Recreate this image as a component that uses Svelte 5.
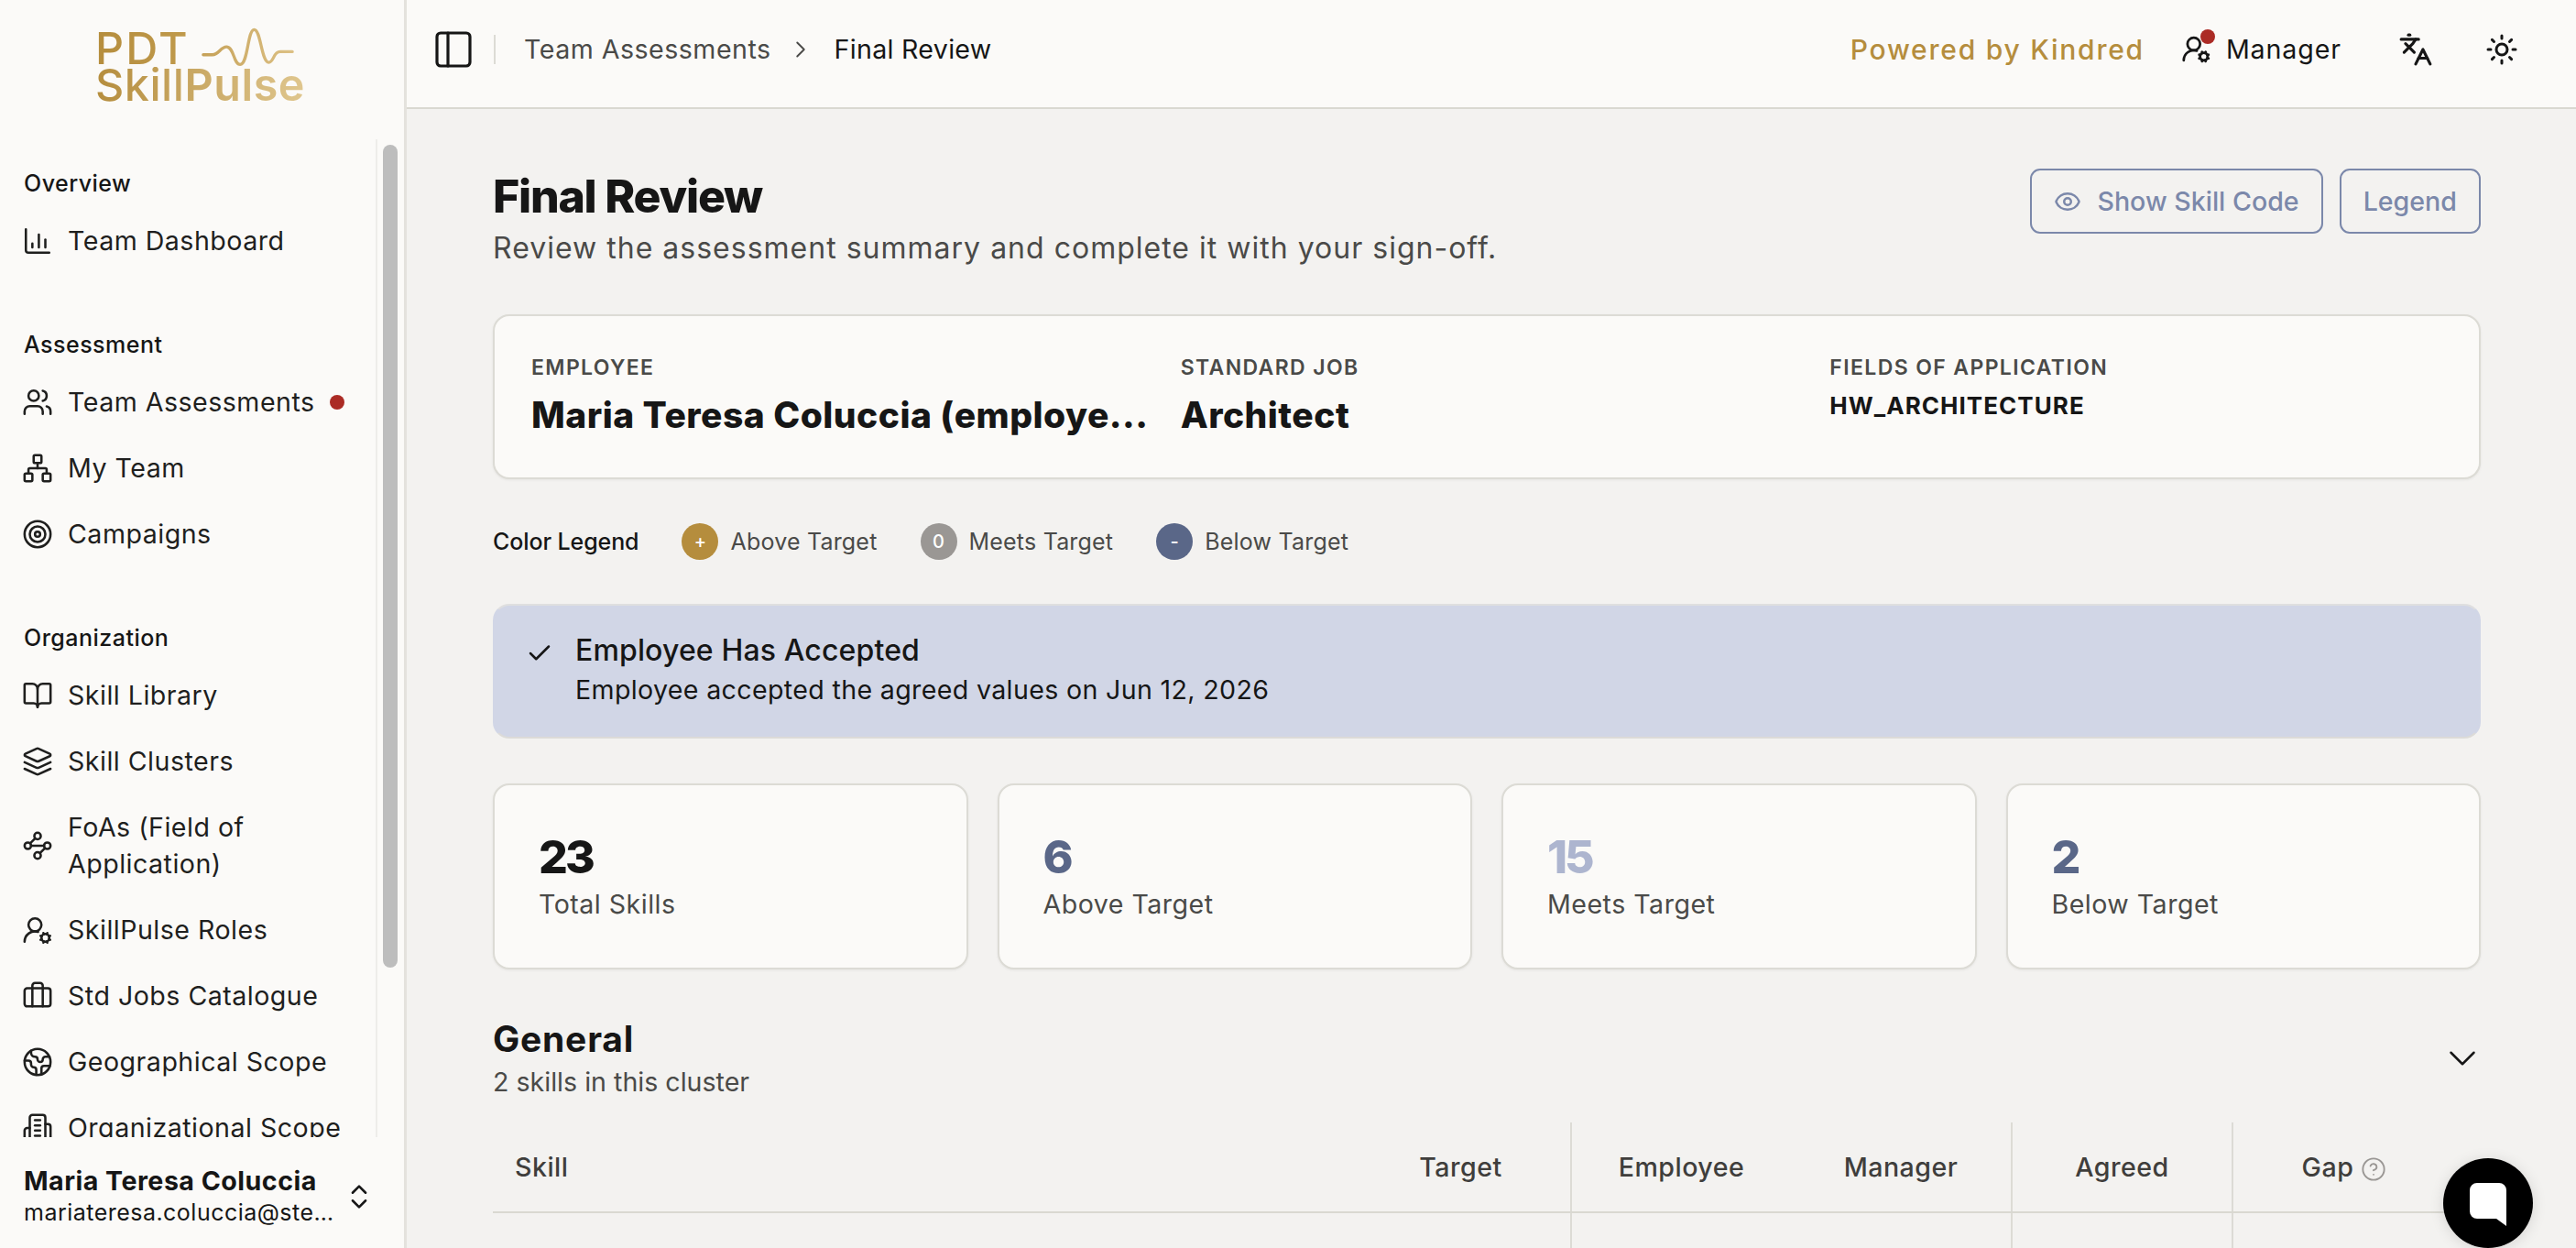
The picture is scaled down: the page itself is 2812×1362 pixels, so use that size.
<script>
  const ic = {
    chart: '<path d="M3 3v16a2 2 0 0 0 2 2h16"/><path d="M18 17v-6"/><path d="M13 17V7"/><path d="M8 17v-3"/>',
    users: '<path d="M16 21v-2a4 4 0 0 0-4-4H6a4 4 0 0 0-4 4v2"/><circle cx="9" cy="7" r="4"/><path d="M22 21v-2a4 4 0 0 0-3-3.87"/><path d="M16 3.13a4 4 0 0 1 0 7.75"/>',
    network: '<rect x="16" y="16" width="6" height="6" rx="1"/><rect x="2" y="16" width="6" height="6" rx="1"/><rect x="9" y="2" width="6" height="6" rx="1"/><path d="M5 16v-3a1 1 0 0 1 1-1h12a1 1 0 0 1 1 1v3"/><path d="M12 12V8"/>',
    target: '<circle cx="12" cy="12" r="10"/><circle cx="12" cy="12" r="6"/><circle cx="12" cy="12" r="2"/>',
    book: '<path d="M12 7v14"/><path d="M3 18a1 1 0 0 1-1-1V4a1 1 0 0 1 1-1h5a4 4 0 0 1 4 4 4 4 0 0 1 4-4h5a1 1 0 0 1 1 1v13a1 1 0 0 1-1 1h-6a3 3 0 0 0-3 3 3 3 0 0 0-3-3z"/>',
    layers: '<path d="m12.83 2.18a2 2 0 0 0-1.66 0L2.6 6.08a1 1 0 0 0 0 1.83l8.58 3.91a2 2 0 0 0 1.66 0l8.58-3.9a1 1 0 0 0 0-1.83Z"/><path d="m22 17.65-9.17 4.16a2 2 0 0 1-1.66 0L2 17.65"/><path d="m22 12.65-9.17 4.16a2 2 0 0 1-1.66 0L2 12.65"/>',
    waypoints: '<circle cx="12" cy="4.5" r="2.5"/><path d="m10.2 6.3-3.9 3.9"/><circle cx="4.5" cy="12" r="2.5"/><path d="M7 12h10"/><circle cx="19.5" cy="12" r="2.5"/><path d="m13.8 17.7 3.9-3.9"/><circle cx="12" cy="19.5" r="2.5"/>',
    usercog: '<path d="M2 21a8 8 0 0 1 10.434-7.62"/><circle cx="10" cy="8" r="5"/><circle cx="18" cy="18" r="3"/><path d="m19.5 14.3-.4.9"/><path d="m16.9 20.8-.4.9"/><path d="m21.7 19.5-.9-.4"/><path d="m15.2 16.9-.9-.4"/><path d="m21.7 16.5-.9.4"/><path d="m15.2 19.1-.9.4"/><path d="m19.5 21.7-.4-.9"/><path d="m16.9 15.2-.4-.9"/>',
    briefcase: '<path d="M16 20V4a2 2 0 0 0-2-2h-4a2 2 0 0 0-2 2v16"/><rect x="2" y="6" width="20" height="14" rx="2"/>',
    earth: '<path d="M21.54 15H17a2 2 0 0 0-2 2v4.54"/><path d="M7 3.34V5a3 3 0 0 0 3 3a2 2 0 0 1 2 2c0 1.1.9 2 2 2a2 2 0 0 0 2-2c0-1.1.9-2 2-2h3.17"/><path d="M11 21.95V18a2 2 0 0 0-2-2a2 2 0 0 1-2-2v-1a2 2 0 0 0-2-2H2.05"/><circle cx="12" cy="12" r="10"/>',
    building: '<path d="M6 22V4a2 2 0 0 1 2-2h8a2 2 0 0 1 2 2v18Z"/><path d="M6 12H4a2 2 0 0 0-2 2v6a2 2 0 0 0 2 2h2"/><path d="M18 9h2a2 2 0 0 1 2 2v9a2 2 0 0 1-2 2h-2"/><path d="M10 6h4"/><path d="M10 10h4"/><path d="M10 14h4"/><path d="M10 18h4"/>',
    updown: '<path d="m7 15 5 5 5-5"/><path d="m7 9 5-5 5 5"/>',
    right: '<path d="m9 18 6-6-6-6"/>',
    down: '<path d="m6 9 6 6 6-6"/>',
    languages: '<path d="m5 8 6 6"/><path d="m4 14 6-6 2-3"/><path d="M2 5h12"/><path d="M7 2h1"/><path d="m22 22-5-10-5 10"/><path d="M14 18h6"/>',
    sun: '<circle cx="12" cy="12" r="4"/><path d="M12 2v2"/><path d="M12 20v2"/><path d="m4.93 4.93 1.41 1.41"/><path d="m17.66 17.66 1.41 1.41"/><path d="M2 12h2"/><path d="M20 12h2"/><path d="m6.34 17.66-1.41 1.41"/><path d="m19.07 4.93-1.41 1.41"/>',
    eye: '<path d="M2.062 12.348a1 1 0 0 1 0-.696 10.75 10.75 0 0 1 19.876 0 1 1 0 0 1 0 .696 10.75 10.75 0 0 1-19.876 0"/><circle cx="12" cy="12" r="3"/>',
    check: '<path d="M20 6 9 17l-5-5"/>',
    help: '<circle cx="12" cy="12" r="10"/><path d="M9.09 9a3 3 0 0 1 5.83 1c0 2-3 3-3 3"/><path d="M12 17h.01"/>'
  };

  const nav = [
    { title: 'Overview', items: [{ label: 'Team Dashboard', icon: 'chart' }] },
    { title: 'Assessment', items: [
      { label: 'Team Assessments', icon: 'users', dot: true },
      { label: 'My Team', icon: 'network' },
      { label: 'Campaigns', icon: 'target' }
    ] },
    { title: 'Organization', items: [
      { label: 'Skill Library', icon: 'book' },
      { label: 'Skill Clusters', icon: 'layers' },
      { label: 'FoAs (Field of Application)', icon: 'waypoints' },
      { label: 'SkillPulse Roles', icon: 'usercog' },
      { label: 'Std Jobs Catalogue', icon: 'briefcase' },
      { label: 'Geographical Scope', icon: 'earth' },
      { label: 'Organizational Scope', icon: 'building' }
    ] }
  ];

  const legend = [
    { sign: '+', label: 'Above Target', color: '#b58d3d' },
    { sign: '0', label: 'Meets Target', color: '#9a9794' },
    { sign: '-', label: 'Below Target', color: '#5a6788' }
  ];

  const stats = [
    { value: 23, label: 'Total Skills', color: '#161616' },
    { value: 6, label: 'Above Target', color: '#5a6788' },
    { value: 15, label: 'Meets Target', color: '#adb5cf' },
    { value: 2, label: 'Below Target', color: '#5a6788' }
  ];
</script>

{#snippet icon(name, size = 30, width = 2)}
  <svg class="icon" viewBox="0 0 24 24" width={size} height={size} stroke-width={width}>{@html ic[name]}</svg>
{/snippet}

<div class="app">
  <aside class="sidebar">
    <div class="logo">
      <div class="logo-top">
        <span class="logo-pdt">PDT</span>
        <svg class="pulse" viewBox="460 30 310 130" width="103" height="43">
          <defs>
            <linearGradient id="pulseGrad" x1="0" x2="1" y1="0" y2="0">
              <stop offset="0" stop-color="#c6a259" />
              <stop offset="1" stop-color="#dcc084" />
            </linearGradient>
          </defs>
          <path d="M468 123h30c22 0 28-28 48-26 24 3 22 58 44 58 26 0 24-115 46-115 22 0 24 108 48 108 18 0 14-35 38-35h40" fill="none" stroke="url(#pulseGrad)" stroke-width="10" stroke-linecap="round" stroke-linejoin="round" />
        </svg>
      </div>
      <div class="logo-name">Skill<b>Pulse</b></div>
    </div>

    <div class="nav-wrap">
      <nav class="nav">
        {#each nav as section}
          <section class="nav-section">
            <div class="nav-title">{section.title}</div>
            {#each section.items as item}
              <div class="nav-item">
                {@render icon(item.icon, 34, 1.8)}
                <span class="nav-label">{item.label}</span>
                {#if item.dot}<span class="nav-dot"></span>{/if}
              </div>
            {/each}
          </section>
        {/each}
      </nav>
      <div class="scrollbar"></div>
    </div>

    <div class="user">
      <div class="user-text">
        <div class="user-name">Maria Teresa Coluccia</div>
        <div class="user-mail">mariateresa.coluccia@stellantis.com</div>
      </div>
      {@render icon('updown', 34, 1.8)}
    </div>
  </aside>

  <div class="main">
    <header class="topbar">
      <button class="toggle" aria-label="Toggle sidebar">
        <svg class="icon" viewBox="2 2 20 20" width="40" height="40" stroke-width="1.6">
          <rect x="3" y="3" width="18" height="18" rx="2" /><path d="M9 3v18" />
        </svg>
      </button>
      <span class="divider"></span>
      <span class="crumb">Team Assessments</span>
      <span class="crumb-sep">{@render icon('right', 30, 1.5)}</span>
      <span class="crumb current">Final Review</span>
      <span class="spacer"></span>
      <span class="powered">Powered by Kindred</span>
      <span class="role">
        <span class="role-icon">{@render icon('usercog', 33, 2)}<i></i></span>
        Manager
      </span>
      <span class="top-icon lang">{@render icon('languages', 38, 2)}</span>
      <span class="top-icon sun">{@render icon('sun', 36, 2)}</span>
    </header>

    <main class="page">
      <div class="page-head">
        <div>
          <h1>Final Review</h1>
          <p>Review the assessment summary and complete it with your sign-off.</p>
        </div>
        <div class="actions">
          <button class="outline">{@render icon('eye', 30, 2)} Show Skill Code</button>
          <button class="outline">Legend</button>
        </div>
      </div>

      <div class="info card">
        <div>
          <div class="info-label">EMPLOYEE</div>
          <div class="info-value">Maria Teresa Coluccia (employe...</div>
        </div>
        <div>
          <div class="info-label">STANDARD JOB</div>
          <div class="info-value">Architect</div>
        </div>
        <div>
          <div class="info-label">FIELDS OF APPLICATION</div>
          <div class="info-small">HW_ARCHITECTURE</div>
        </div>
      </div>

      <div class="legend">
        <span class="legend-title">Color Legend</span>
        {#each legend as l}
          <span class="legend-item">
            <span class="legend-dot" style="background: {l.color}">{l.sign}</span>
            {l.label}
          </span>
        {/each}
      </div>

      <div class="alert">
        {@render icon('check', 30, 2)}
        <div>
          <div class="alert-title">Employee Has Accepted</div>
          <div class="alert-text">Employee accepted the agreed values on Jun 12, 2026</div>
        </div>
      </div>

      <div class="stats">
        {#each stats as s}
          <div class="stat card">
            <div class="stat-value" style="color: {s.color}">{s.value}</div>
            <div class="stat-label">{s.label}</div>
          </div>
        {/each}
      </div>

      <div class="cluster">
        <div>
          <h2>General</h2>
          <div class="cluster-sub">2 skills in this cluster</div>
        </div>
        {@render icon('down', 50, 1.2)}
      </div>

      <table>
        <colgroup>
          <col style="width: 937px" /><col style="width: 240px" /><col style="width: 240px" />
          <col style="width: 241px" /><col style="width: 241px" /><col style="width: 271px" />
        </colgroup>
        <thead>
          <tr>
            <th class="left">Skill</th>
            <th>Target</th>
            <th class="line">Employee</th>
            <th>Manager</th>
            <th class="line">Agreed</th>
            <th class="line gap">Gap {@render icon('help', 28, 1.6)}</th>
          </tr>
        </thead>
        <tbody>
          <tr>
            <td></td><td></td><td class="line"></td><td></td><td class="line"></td><td class="line"></td>
          </tr>
        </tbody>
      </table>
    </main>
  </div>

  <button class="chat" aria-label="Chat">
    <svg viewBox="0 0 40 47" width="40" height="47">
      <path d="M8 0h24a8 8 0 0 1 8 8v39l-11-8H8a8 8 0 0 1-8-8V8a8 8 0 0 1 8-8z" fill="#fff" />
    </svg>
  </button>
</div>

<style>
  :global(body) {
    margin: 0;
    background: #f3f2f0;
  }

  .app {
    display: flex;
    height: 100vh;
    overflow: hidden;
    position: relative;
    font-family: Inter, "Liberation Sans", sans-serif;
    color: #161616;
    letter-spacing: 0.48px;
  }

  .icon {
    fill: none;
    stroke: currentColor;
    stroke-linecap: round;
    stroke-linejoin: round;
    flex: none;
  }

  button {
    font: inherit;
    letter-spacing: inherit;
    background: none;
    border: 0;
    padding: 0;
    color: inherit;
  }

  /* sidebar */
  .sidebar {
    width: 441px;
    flex: none;
    display: flex;
    flex-direction: column;
    background: #fbfaf8;
    border-right: 3px solid #e4e2dd;
  }

  .logo {
    height: 152px;
    flex: none;
    padding: 33px 0 0 104px;
    box-sizing: border-box;
  }

  .logo-top {
    display: flex;
    align-items: center;
    height: 40px;
    gap: 12px;
  }

  .logo-pdt,
  .logo-name {
    font-size: 48.5px;
    line-height: 40px;
    font-weight: 500;
    background: linear-gradient(90deg, #b58d3d, #e0c78f);
    background-clip: text;
    -webkit-background-clip: text;
    color: transparent;
  }

  .logo-pdt {
    font-weight: 550;
    letter-spacing: 2.2px;
    background: linear-gradient(90deg, #b58d3d, #c09a4c);
    background-clip: text;
    -webkit-background-clip: text;
  }

  .logo-name {
    width: 232px;
  }

  .logo-name b {
    font-weight: 600;
  }

  .pulse {
    margin-top: -6px;
  }

  .nav-wrap {
    flex: 1;
    min-height: 0;
    position: relative;
    overflow: hidden;
  }

  .nav {
    width: 412px;
    height: 100%;
    box-sizing: border-box;
    padding: 21px 0 0 26px;
    border-right: 2px solid #eeedea;
    overflow: hidden;
  }

  .nav-section {
    margin-bottom: 50px;
  }

  .nav-title {
    font-size: 25px;
    font-weight: 500;
    line-height: 54px;
  }

  .nav-item {
    display: flex;
    align-items: center;
    gap: 16px;
    margin-left: -2px;
    padding: 16px 0;
    font-size: 28.6px;
    line-height: 40px;
    color: #1f1f1e;
  }

  .nav-label {
    max-width: 310px;
  }

  .nav-dot {
    width: 16px;
    height: 16px;
    border-radius: 50%;
    background: #ab2b25;
  }

  .scrollbar {
    position: absolute;
    left: 418px;
    top: 6px;
    width: 16px;
    height: 898px;
    border-radius: 8px;
    background: #bdbdbd;
  }

  .user {
    height: 121px;
    flex: none;
    box-sizing: border-box;
    padding: 29px 32px 0 26px;
    display: flex;
    align-items: flex-start;
    justify-content: space-between;
  }

  .user-text {
    width: 340px;
  }

  .user-name {
    font-size: 28.6px;
    font-weight: 700;
    line-height: 38px;
    white-space: nowrap;
  }

  .user-mail {
    font-size: 25px;
    line-height: 30px;
    white-space: nowrap;
    overflow: hidden;
    text-overflow: ellipsis;
  }

  .user .icon {
    margin-top: 19px;
  }

  /* top bar */
  .main {
    flex: 1;
    min-width: 0;
    display: flex;
    flex-direction: column;
  }

  .topbar {
    height: 119px;
    flex: none;
    box-sizing: border-box;
    display: flex;
    align-items: center;
    padding: 0 63px 10px 31px;
    background: #fbfaf8;
    border-bottom: 2px solid #d9d8d1;
    font-size: 28.6px;
  }

  .toggle {
    display: flex;
  }

  .divider {
    width: 2px;
    height: 32px;
    background: #dcdbd5;
    margin: 0 31px 0 24px;
  }

  .crumb {
    color: #4a4a48;
  }

  .crumb.current {
    color: #161616;
    letter-spacing: 0.3px;
  }

  .crumb-sep {
    display: flex;
    margin: 0 22px 0 17px;
    color: #4a4a48;
  }

  .spacer {
    flex: 1;
  }

  .powered {
    color: #b58d3d;
    font-weight: 500;
    font-size: 30px;
    letter-spacing: 1.76px;
  }

  .role {
    display: flex;
    align-items: center;
    gap: 16px;
    margin-left: 40px;
    letter-spacing: 0.9px;
  }

  .role-icon {
    display: flex;
    position: relative;
  }

  .role-icon i {
    position: absolute;
    right: -4px;
    top: -5px;
    width: 16px;
    height: 16px;
    border-radius: 50%;
    background: #ab2b25;
  }

  .top-icon {
    display: flex;
  }

  .lang {
    margin-left: 62px;
  }

  .sun {
    margin-left: 57px;
  }

  /* page */
  .page {
    flex: 1;
    min-height: 0;
    overflow: hidden;
    padding: 65px 104px 0 94px;
  }

  .page-head {
    display: flex;
    justify-content: space-between;
    align-items: flex-start;
    margin-bottom: 50px;
  }

  h1 {
    margin: 0;
    font-size: 50px;
    line-height: 60px;
    font-weight: 800;
    letter-spacing: -1.25px;
  }

  .page-head p {
    margin: 5px 0 0;
    font-size: 32px;
    line-height: 44px;
    color: #4a4a48;
    letter-spacing: 1.01px;
  }

  .actions {
    display: flex;
    gap: 18px;
  }

  .outline {
    height: 71px;
    box-sizing: border-box;
    display: flex;
    align-items: center;
    gap: 17px;
    padding: 0 24px;
    border: 2px solid #7b88aa;
    border-radius: 11px;
    color: #7b88aa;
    font-size: 28.6px;
    font-weight: 500;
    letter-spacing: 0;
  }

  .card {
    box-sizing: border-box;
    background: #fbfaf8;
    border: 2px solid #dcdbd5;
    border-radius: 18px;
    box-shadow: 0 1px 3px rgba(0, 0, 0, 0.06);
  }

  .info {
    height: 180px;
    padding: 36px 32px 0 40px;
    display: grid;
    grid-template-columns: repeat(3, 1fr);
    gap: 32px;
  }

  .info > div {
    min-width: 0;
  }

  .info-label {
    font-size: 23px;
    line-height: 40px;
    font-weight: 600;
    letter-spacing: 1.38px;
    color: #4a4a48;
  }

  .info-value {
    margin-top: 7px;
    font-size: 39px;
    line-height: 50px;
    font-weight: 800;
    letter-spacing: 0.47px;
    white-space: nowrap;
  }

  .info-small {
    font-size: 26px;
    line-height: 30px;
    font-weight: 700;
    letter-spacing: 1.04px;
    margin-top: 7px;
  }

  .legend {
    display: flex;
    align-items: center;
    height: 40px;
    margin-top: 48px;
    font-size: 25px;
    letter-spacing: 0.2px;
  }

  .legend-title {
    font-weight: 500;
    letter-spacing: -0.1px;
    margin-right: 47px;
  }

  .legend-item {
    display: flex;
    align-items: center;
    gap: 13px;
    color: #4a4a48;
    margin-right: 47px;
  }

  .legend-dot {
    width: 40px;
    height: 40px;
    border-radius: 50%;
    display: flex;
    align-items: center;
    justify-content: center;
    color: #fff;
    font-size: 20px;
    font-weight: 500;
  }

  .alert {
    height: 147px;
    box-sizing: border-box;
    margin-top: 48px;
    padding: 27px 0 0 34px;
    display: flex;
    gap: 24px;
    background: #d1d6e6;
    border-radius: 18px;
    border: 2px solid #d9d8d6;
    border-color: #dfdfdf #d1d6e6 #dcdbd8;
  }

  .alert > .icon {
    margin-top: 10px;
  }

  .alert-title {
    font-size: 32px;
    line-height: 44px;
    font-weight: 500;
    letter-spacing: 0.14px;
  }

  .alert-text {
    font-size: 28.6px;
    line-height: 42px;
    letter-spacing: 0.34px;
  }

  .stats {
    display: grid;
    grid-template-columns: repeat(4, 1fr);
    gap: 32px;
    margin-top: 49px;
  }

  .stat {
    height: 203px;
    padding: 48px 48px 0;
  }

  .stat-value {
    font-size: 50px;
    line-height: 60px;
    font-weight: 800;
    letter-spacing: -3px;
  }

  .stat-label {
    font-size: 28.6px;
    line-height: 44px;
    color: #4a4a48;
  }

  .cluster {
    margin-top: 51px;
    display: flex;
    justify-content: space-between;
    align-items: center;
    margin-right: -5px;
  }

  h2 {
    margin: 0;
    font-size: 39px;
    line-height: 50px;
    font-weight: 700;
    letter-spacing: 0.78px;
  }

  .cluster-sub {
    margin-top: 2px;
    font-size: 28.6px;
    line-height: 40px;
    color: #4a4a48;
    letter-spacing: 0;
  }

  table {
    width: 2170px;
    table-layout: fixed;
    border-collapse: collapse;
    margin-top: 24px;
  }

  th {
    height: 97px;
    padding: 0;
    font-size: 28.6px;
    font-weight: 500;
    color: #3f3e3c;
    border-bottom: 2px solid #d9d8d1;
  }

  th.left {
    text-align: left;
    padding-left: 24px;
  }

  th.gap {
    padding-right: 28px;
  }

  th.gap .icon {
    vertical-align: -6px;
    color: #9a9794;
  }

  td {
    height: 200px;
    padding: 0;
  }

  .line {
    border-left: 2px solid #dcdbd5;
  }

  .chat {
    position: absolute;
    right: 47px;
    bottom: 0;
    width: 98px;
    height: 98px;
    border-radius: 50%;
    background: #000;
    display: flex;
    align-items: center;
    justify-content: center;
    box-shadow: 0 2px 16px rgba(0, 0, 0, 0.12);
  }

  .chat svg {
    margin-top: 3px;
  }
</style>
